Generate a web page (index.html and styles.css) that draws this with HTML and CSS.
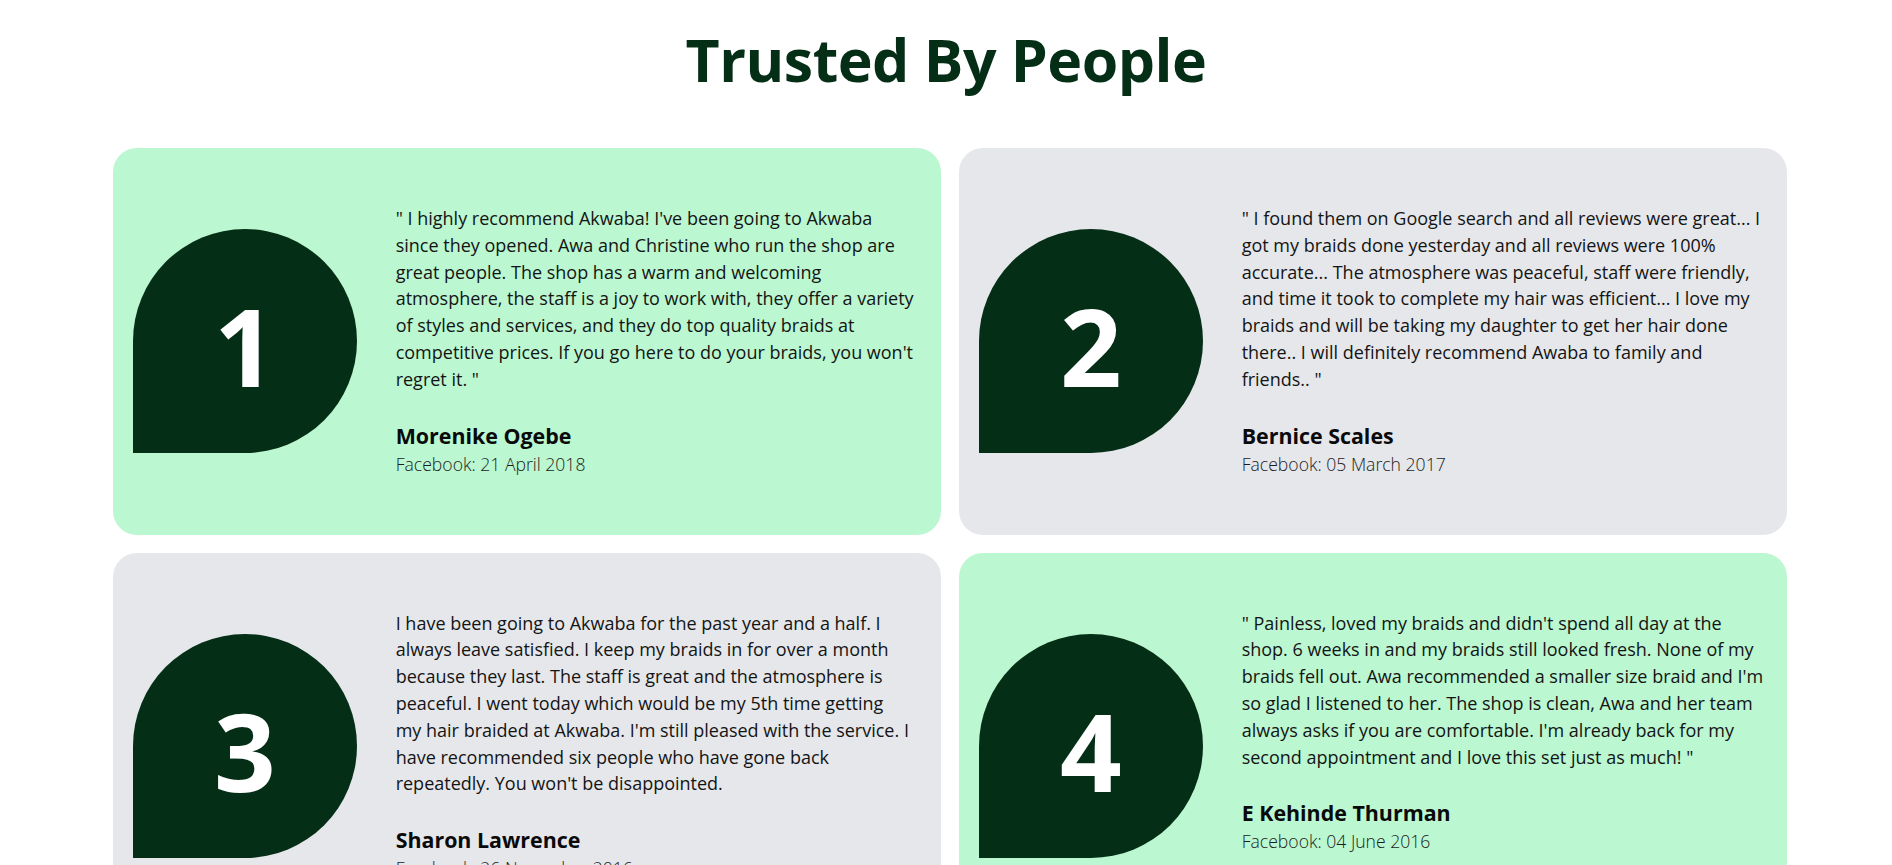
FILE: index.html
```html
<!DOCTYPE html>
<html lang="en">
<head>
<meta charset="utf-8">
<title>Trusted By People</title>
<link rel="stylesheet" href="styles.css">
</head>
<body>
<main class="page">
  <h1 class="title">Trusted By People</h1>
  <section class="grid">
    <article class="card card-green">
      <div class="badge-col"><div class="badge">1</div></div>
      <div class="content">
        <p class="quote">" I highly recommend Akwaba! I've been going to Akwaba<br>since they opened. Awa and Christine who run the shop are<br>great people. The shop has a warm and welcoming<br>atmosphere, the staff is a joy to work with, they offer a variety<br>of styles and services, and they do top quality braids at<br>competitive prices. If you go here to do your braids, you won't<br>regret it. "</p>
        <h3 class="name">Morenike Ogebe</h3>
        <p class="source">Facebook: 21 April 2018</p>
      </div>
    </article>
    <article class="card card-gray">
      <div class="badge-col"><div class="badge">2</div></div>
      <div class="content">
        <p class="quote">" I found them on Google search and all reviews were great... I<br>got my braids done yesterday and all reviews were 100%<br>accurate... The atmosphere was peaceful, staff were friendly,<br>and time it took to complete my hair was efficient... I love my<br>braids and will be taking my daughter to get her hair done<br>there.. I will definitely recommend Awaba to family and<br>friends.. "</p>
        <h3 class="name">Bernice Scales</h3>
        <p class="source">Facebook: 05 March 2017</p>
      </div>
    </article>
    <article class="card card-gray">
      <div class="badge-col"><div class="badge">3</div></div>
      <div class="content">
        <p class="quote">I have been going to Akwaba for the past year and a half. I<br>always leave satisfied. I keep my braids in for over a month<br>because they last. The staff is great and the atmosphere is<br>peaceful. I went today which would be my 5th time getting<br>my hair braided at Akwaba. I'm still pleased with the service. I<br>have recommended six people who have gone back<br>repeatedly. You won't be disappointed.</p>
        <h3 class="name">Sharon Lawrence</h3>
        <p class="source">Facebook: 26 November 2016</p>
      </div>
    </article>
    <article class="card card-green">
      <div class="badge-col"><div class="badge">4</div></div>
      <div class="content">
        <p class="quote">" Painless, loved my braids and didn't spend all day at the<br>shop. 6 weeks in and my braids still looked fresh. None of my<br>braids fell out. Awa recommended a smaller size braid and I'm<br>so glad I listened to her. The shop is clean, Awa and her team<br>always asks if you are comfortable. I'm already back for my<br>second appointment and I love this set just as much! "</p>
        <h3 class="name">E Kehinde Thurman</h3>
        <p class="source">Facebook: 04 June 2016</p>
      </div>
    </article>
  </section>
</main>
</body>
</html>
```
FILE: styles.css
```css
* { box-sizing: border-box; }
html, body { margin: 0; padding: 0; background: #ffffff; }
body {
  font-family: "Open Sans", "Noto Sans", sans-serif;
  color: #111111;
}
.page {
  padding-top: 19px;
}
.title {
  margin: 0;
  text-align: center;
  font-size: 59px;
  line-height: 80px;
  font-weight: 700;
  color: #052e16;
  letter-spacing: -0.5px;
}
.grid {
  margin: 49px 0 0 113px;
  width: 1674px;
  display: grid;
  grid-template-columns: 1fr 1fr;
  column-gap: 18px;
  row-gap: 18px;
}
.card {
  display: flex;
  align-items: stretch;
  padding: 20px;
  border-radius: 24px;
}
.card-green { background: #bbf7d0; }
.card-gray { background: #e5e7eb; }
.badge-col {
  flex: 0 0 33.333%;
  display: flex;
  align-items: center;
}
.badge {
  width: 224px;
  height: 224px;
  background: #052e16;
  color: #ffffff;
  border-radius: 9999px 9999px 9999px 0;
  display: flex;
  align-items: center;
  justify-content: center;
  font-size: 108px;
  font-weight: 700;
  line-height: 1;
  padding-top: 10px;
}
.content {
  flex: 1 1 auto;
  padding: 37px 0 37px 0;
}
.quote {
  margin: 0;
  font-size: 18px;
  line-height: 26.8px;
  color: #141414;
}
.name {
  margin: 28px 0 0 0;
  font-size: 21.4px;
  line-height: 30px;
  font-weight: 700;
  color: #0a0a0a;
}
.source {
  margin: 0;
  font-size: 17.6px;
  line-height: 27px;
  font-weight: 300;
  color: #1c1c1c;
}
```
